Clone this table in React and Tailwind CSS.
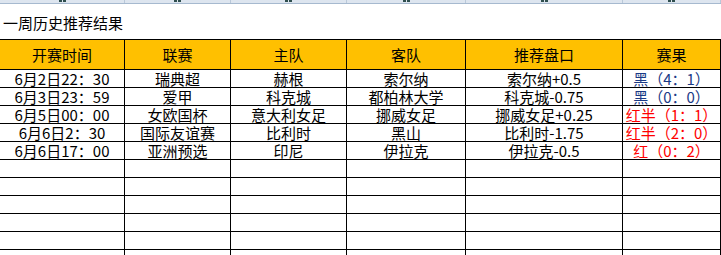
const rows = [
    { time: '6月2日22：30', league: '瑞典超', home: '赫根', away: '索尔纳', pick: '索尔纳+0.5', result: '黑（4：1）', red: false },
    { time: '6月3日23：59', league: '爱甲', home: '科克城', away: '都柏林大学', pick: '科克城-0.75', result: '黑（0：0）', red: false },
    { time: '6月5日00：00', league: '女欧国杯', home: '意大利女足', away: '挪威女足', pick: '挪威女足+0.25', result: '红半（1：1）', red: true },
    { time: '6月6日2：30', league: '国际友谊赛', home: '比利时', away: '黑山', pick: '比利时-1.75', result: '红半（2：0）', red: true },
    { time: '6月6日17：00', league: '亚洲预选', home: '印尼', away: '伊拉克', pick: '伊拉克-0.5', result: '红（0：2）', red: true },
];

const headers = ['开赛时间', '联赛', '主队', '客队', '推荐盘口', '赛果'];
const grid = 'grid grid-cols-[125px_106px_116px_119px_157px_1fr]';
const font = { fontFamily: '"Noto Sans CJK SC", "Noto Sans", sans-serif' };

function Cell({ children, className = '' }) {
    return (
        <div className={`border-r border-black flex items-center justify-center whitespace-nowrap ${className}`}>
            {children}
        </div>
    );
}

export default function App() {
    return (
        <div className="w-[721px] h-[255px] overflow-hidden bg-white text-black" style={font}>
            {/* sheet column header strip (letters cut off at the top) */}
            <div className={`${grid} h-[4px] bg-[#dde5ef] border-b border-[#a6b9cf]`}>
                {headers.map((h) => (
                    <div key={h} className="border-r border-[#b9c8d9] flex justify-center gap-px">
                        <div className="h-[2px] w-[3px] bg-[#2f4f4f]" />
                        <div className="h-[2px] w-[3px] bg-[#2f4f4f]" />
                    </div>
                ))}
            </div>

            {/* title */}
            <div className="h-[35px] flex items-center pl-[3px] pt-[1px] text-[15px] leading-[17px]">
                一周历史推荐结果
            </div>

            {/* header */}
            <div className={`${grid} h-[31px] border-y border-black bg-[#ffc000] text-[15px] leading-[17px]`}>
                {headers.map((h) => (
                    <Cell key={h}>{h}</Cell>
                ))}
            </div>

            {/* data rows */}
            {rows.map((r) => (
                <div key={r.time} className={`${grid} h-[18px] border-b border-black text-[15px] leading-[17px]`}>
                    <Cell>{r.time}</Cell>
                    <Cell>{r.league}</Cell>
                    <Cell>{r.home}</Cell>
                    <Cell>{r.away}</Cell>
                    <Cell>{r.pick}</Cell>
                    <Cell className={r.red ? 'text-[#ff0000]' : 'text-[#1a3a86]'}>{r.result}</Cell>
                </div>
            ))}

            {/* empty rows */}
            {[0, 1, 2, 3, 4, 5].map((i) => (
                <div key={i} className={`${grid} h-[18px] border-b border-black`}>
                    {headers.map((h) => (
                        <Cell key={h} />
                    ))}
                </div>
            ))}
        </div>
    );
}
